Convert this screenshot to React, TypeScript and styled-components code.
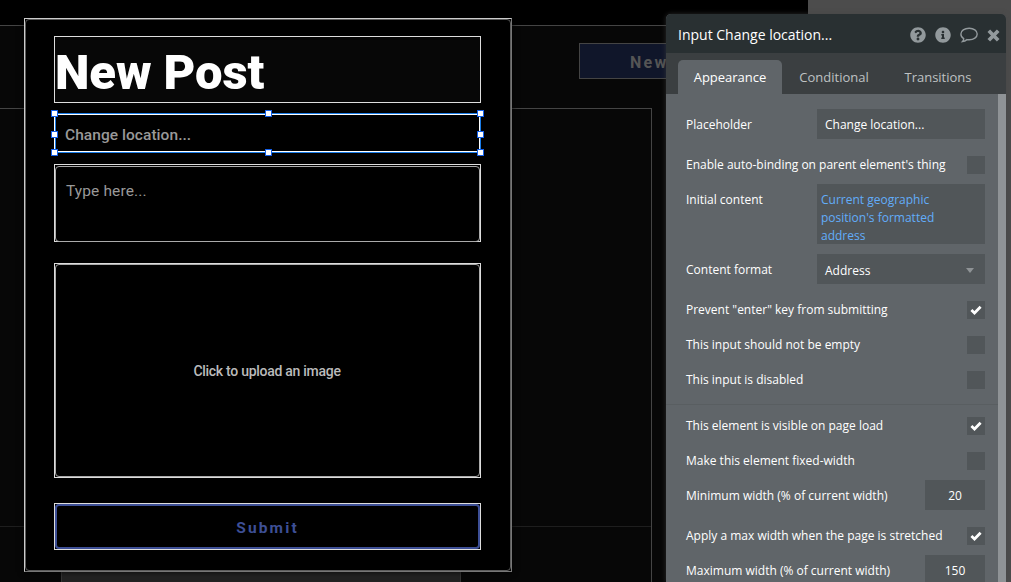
import React from "react";
import styled, { createGlobalStyle, css } from "styled-components";
import { FaQuestionCircle, FaInfoCircle } from "react-icons/fa";

const Global = createGlobalStyle`
  *, *::before, *::after { box-sizing: border-box; }
  body { margin: 0; background: #000; overflow: hidden; }
`;

const Editor = styled.main`
  position: relative;
  display: flex;
  width: 1011px;
  height: 582px;
  overflow: hidden;
  background: #4c4c4c;
  font-family: "Open Sans", sans-serif;
`;

const Page = styled.div`
  display: flex;
  flex-direction: column;
  width: 808px;
  padding-top: 25px;
  background: #000;
`;

const PageHeader = styled.header`
  display: flex;
  justify-content: flex-end;
  align-items: flex-start;
  height: 83px;
  padding: 17px 58px 0 0;
  border-top: 1px solid #444;
  background: #070707;
`;

const NewButton = styled.div`
  display: flex;
  align-items: center;
  width: 171px;
  height: 36px;
  padding: 2px 0 0 50px;
  border: 1px solid #444;
  background: #10162a;
  color: #555;
  font: 700 16px Roboto, sans-serif;
  letter-spacing: 2.3px;
`;

const PageBody = styled.div`
  flex: 1;
  background: #070707;
`;

const Feed = styled.div`
  display: flex;
  flex-direction: column;
  width: 652px;
  height: 474px;
  border: solid #444;
  border-width: 1px 1px 0 0;
`;

const FeedCell = styled.div`
  height: 418px;
  border-bottom: 1px solid #1e1e1e;
`;

const FeedNext = styled.div`
  flex: 1;
  width: 400px;
  margin: 10px 0 0 61px;
  border: solid #333;
  border-width: 0 1px;
  background: #222;
`;

const Popup = styled.section`
  position: absolute;
  left: 24px;
  top: 18px;
  display: flex;
  flex-direction: column;
  width: 488px;
  height: 554px;
  padding: 17px 30px 0 29px;
  border: 1px solid;
  border-color: #ccc #777 #777 #ccc;
  background: #000;
  box-shadow: 0 0 6px rgba(0, 0, 0, 0.8);
  font-family: Roboto, sans-serif;

  &::before {
    content: "";
    position: absolute;
    inset: 0;
    border: 1px solid #5c5c5c;
    border-radius: 4px;
    pointer-events: none;
  }
`;

const Title = styled.h1`
  height: 67px;
  margin: 0;
  border: 1px solid #ddd;
  background: #070707;
  color: #fff;
  font-size: 49px;
  font-weight: 900;
  line-height: 71px;
  letter-spacing: -0.1px;
`;

const Selected = styled.div`
  position: relative;
  height: 40px;
  margin-top: 10px;
  padding: 0 10px;
  border: 1px solid #1a7ce8;
  border-left-color: #fff;
  box-shadow: inset 0 1px #fff, inset 0 -1px #fff, inset -1px 0 #fff, inset 1px 0 #1a7ce8;
  color: #999;
  font-size: 15.5px;
  font-weight: 500;
  line-height: 42px;
  letter-spacing: 0.05px;
`;

const Handle = styled.i<{ $x: string; $y: string }>`
  position: absolute;
  left: ${(p) => p.$x};
  top: ${(p) => p.$y};
  width: 7px;
  height: 7px;
  margin: -4px 0 0 -4px;
  border: 1px solid #1560e8;
  background: #fff;
`;

const Outlined = styled.div<{ $height: number; $gap: number; $inner: string; $thick?: number }>`
  position: relative;
  height: ${(p) => p.$height}px;
  margin-top: ${(p) => p.$gap}px;
  border: 1px solid #ddd;

  &::before {
    content: "";
    position: absolute;
    inset: 0;
    border: ${(p) => p.$thick ?? 1}px solid ${(p) => p.$inner};
    border-radius: 4px;
  }
`;

const Multiline = styled(Outlined)`
  padding: 17px 11px;
  color: #999;
  font-size: 15.5px;
  line-height: 18px;
  letter-spacing: 0.12px;

  &::before { inset: 1px 0 -1px; }
`;

const Upload = styled(Outlined)`
  display: flex;
  align-items: center;
  justify-content: center;
  padding-right: 1px;
  color: #bbb;
  font-size: 14px;
  font-weight: 500;
  letter-spacing: -0.28px;
`;

const Submit = styled(Outlined)`
  display: flex;
  align-items: center;
  justify-content: center;
  padding-top: 2px;
  color: #3d4f96;
  font-size: 15.5px;
  font-weight: 700;
  letter-spacing: 2.15px;
`;

const Panel = styled.aside`
  position: absolute;
  left: 666px;
  top: 14px;
  display: flex;
  flex-direction: column;
  width: 340px;
  height: 568px;
  border-radius: 5px 5px 0 0;
  overflow: hidden;
  background: #606569;
  box-shadow: 0 0 5px rgba(70, 70, 70, 0.6);
`;

const PanelHeader = styled.header`
  display: flex;
  align-items: center;
  height: 39px;
  padding: 3px 6px 0 12px;
  background: #293032;
  color: #fff;
  font-size: 14px;
`;

const PanelTitle = styled.span`
  flex: 1;
  padding-bottom: 2px;
`;

const Actions = styled.div`
  display: flex;
  align-items: center;
  gap: 9px;
  color: #92999c;

  svg { display: block; }
`;

const Tabs = styled.nav`
  display: flex;
  height: 41px;
  padding: 7px 0 0 12px;
  background: #3b3f41;
`;

const Tab = styled.div<{ $active?: boolean; $width: number }>`
  display: flex;
  align-items: center;
  justify-content: center;
  width: ${(p) => p.$width}px;
  border-radius: 5px 5px 0 0;
  color: #bfc2c3;
  font-size: 13px;
  ${(p) => p.$active && css`
    background: #606569;
    color: #fff;
  `}
`;

const Scroll = styled.div`
  flex: 1;
  min-height: 0;
  overflow: hidden;
  padding-top: 15px;
  border-right: 8px solid #8f9396;
`;

const Row = styled.div<{ $gap?: number }>`
  display: flex;
  justify-content: space-between;
  align-items: flex-start;
  padding: 0 13px 0 20px;
  margin-bottom: ${(p) => p.$gap ?? 10}px;
  color: #fff;
  font-size: 12px;
`;

const Label = styled.span<{ $tall?: boolean }>`
  height: ${(p) => (p.$tall ? 30 : 18)}px;
  line-height: ${(p) => (p.$tall ? 31 : 17)}px;
`;

const field = css`
  height: 30px;
  background: #515659;
  line-height: 31px;
`;

const TextField = styled.div`
  ${field}
  width: 168px;
  padding: 0 8px;
`;

const NumberField = styled.div`
  ${field}
  width: 60px;
  text-align: center;
`;

const Select = styled(TextField)`
  display: flex;
  align-items: center;
  justify-content: space-between;
  padding: 3px 11px 0 8px;
`;

const Caret = styled.span`
  border: solid transparent;
  border-width: 5px 4px 0;
  border-top-color: #8f9396;
`;

const Expression = styled.div`
  width: 168px;
  height: 60px;
  padding: 7px 4px 0;
  background: #515659;
  color: #62adfa;
  line-height: 18px;
`;

const Check = styled.span`
  display: flex;
  align-items: center;
  justify-content: center;
  width: 18px;
  height: 18px;
  background: #515659;
`;

const Divider = styled.hr`
  height: 1px;
  margin: -2px 0 12px;
  border: 0;
  background: #595e61;
`;

const CheckRow = ({ label, on, gap = 17 }: { label: string; on?: boolean; gap?: number }) => (
  <Row $gap={gap}>
    <Label>{label}</Label>
    <Check>
      {on && (
        <svg width="12" height="10" viewBox="0 0 12 10">
          <path d="M1.4 5 4.5 8 10.6 1.8" fill="none" stroke="#fff" strokeWidth="2.8" />
        </svg>
      )}
    </Check>
  </Row>
);

const handles = [
  ["0px", "0px"],
  ["calc(50% + 1px)", "0px"],
  ["calc(100% + 1px)", "0px"],
  ["0px", "calc(50% + 2px)"],
  ["calc(100% + 1px)", "calc(50% + 2px)"],
  ["0px", "calc(100% + 1px)"],
  ["calc(50% + 1px)", "calc(100% + 1px)"],
  ["calc(100% + 1px)", "calc(100% + 1px)"],
];

export default function App() {
  return (
    <>
      <Global />
      <Editor>
        <Page>
          <PageHeader><NewButton>New Post</NewButton></PageHeader>
          <PageBody>
            <Feed>
              <FeedCell />
              <FeedNext />
            </Feed>
          </PageBody>
        </Page>

        <Popup>
          <Title>New Post</Title>
          <Selected>
            Change location...
            {handles.map(([x, y]) => <Handle key={x + y} $x={x} $y={y} />)}
          </Selected>
          <Multiline $height={78} $gap={11} $inner="#aaa">Type here...</Multiline>
          <Upload $height={215} $gap={21} $inner="#aaa">Click to upload an image</Upload>
          <Submit $height={47} $gap={25} $inner="#3d4f96" $thick={2}>Submit</Submit>
        </Popup>

        <Panel>
          <PanelHeader>
            <PanelTitle>Input Change location...</PanelTitle>
            <Actions>
              <FaQuestionCircle size={16} />
              <FaInfoCircle size={16} />
              <svg width="18" height="16" viewBox="0 0 18 16">
                <path d="M9.2 1.2c4.5 0 8 2.5 8 5.8s-3.5 5.8-8 5.8c-.8 0-1.5-.1-2.2-.2-1.4 1.2-2.8 1.9-4.5 2 .8-.8 1.2-1.7 1.2-2.9C1.9 10.7.9 9 .9 7c0-3.3 3.5-5.8 8.3-5.8z" fill="none" stroke="currentColor" strokeWidth="1.4" />
              </svg>
              <svg width="13" height="13" viewBox="0 0 13 13">
                <path d="M1.8 1.8 11.2 11.2M11.2 1.8 1.8 11.2" stroke="currentColor" strokeWidth="3.7" />
              </svg>
            </Actions>
          </PanelHeader>
          <Tabs>
            <Tab $active $width={104}>Appearance</Tab>
            <Tab $width={104}>Conditional</Tab>
            <Tab $width={104}>Transitions</Tab>
          </Tabs>
          <Scroll>
            <Row $gap={17}><Label $tall>Placeholder</Label><TextField>Change location...</TextField></Row>
            <CheckRow label="Enable auto-binding on parent element's thing" gap={10} />
            <Row><Label $tall>Initial content</Label><Expression>Current geographic position's formatted address</Expression></Row>
            <Row $gap={17}><Label $tall>Content format</Label><Select>Address<Caret /></Select></Row>
            <CheckRow label={'Prevent "enter" key from submitting'} on />
            <CheckRow label="This input should not be empty" />
            <CheckRow label="This input is disabled" />
            <Divider />
            <CheckRow label="This element is visible on page load" on />
            <CheckRow label="Make this element fixed-width" gap={10} />
            <Row $gap={17}><Label $tall>Minimum width (% of current width)</Label><NumberField>20</NumberField></Row>
            <CheckRow label="Apply a max width when the page is stretched" on gap={10} />
            <Row><Label $tall>Maximum width (% of current width)</Label><NumberField>150</NumberField></Row>
          </Scroll>
        </Panel>
      </Editor>
    </>
  );
}
